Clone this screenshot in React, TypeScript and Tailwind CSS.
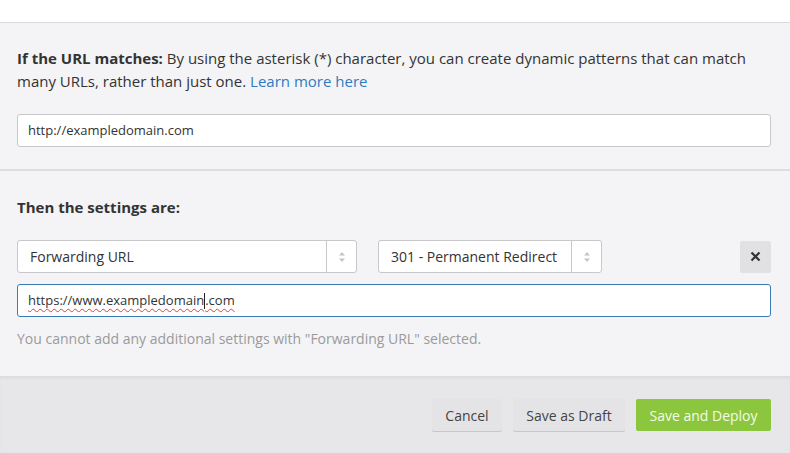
import React from "react";

function Arrows() {
  return (
    <svg width="8" height="14" viewBox="0 0 8 14">
      <path d="M4 2 L7 5.5 L1 5.5 Z" fill="#c4c4c6" />
      <path d="M4 12 L7 8.5 L1 8.5 Z" fill="#c4c4c6" />
    </svg>
  );
}

function Select({ label, width }: { label: string; width: string }) {
  return (
    <div className={`flex h-[33px] ${width} rounded-[3px] border border-[#c8c8ca] bg-white`}>
      <div className="flex flex-1 items-center pl-3 text-[14px] text-[#333]">{label}</div>
      <div className="flex w-[30px] items-center justify-center border-l border-[#c8c8ca]">
        <Arrows />
      </div>
    </div>
  );
}

export default function App() {
  return (
    <div className="h-[453px] w-[790px] overflow-hidden bg-[#f4f4f6] text-[#333]" style={{ fontFamily: '"Open Sans", sans-serif' }}>
      <div className="h-[23px] border-b border-[#dadadc] bg-white" />
      <div className="border-b-2 border-[#dedee0] pb-[22px] pl-[17px] pr-[19px] pt-[24px]">
        <p className="text-[15px] leading-[23px] text-[#333]">
          <span className="font-bold">If the URL matches:</span> By using the asterisk (*) character, you can create dynamic patterns that can match many URLs, rather than just one.{" "}
          <span className="text-[#2f7bbf]">Learn more here</span>
        </p>
        <div className="mt-[21px] flex h-[33px] items-center rounded-[3px] border border-[#c8c8ca] bg-white pl-[10px] text-[13px] text-[#333]">
          http://exampledomain.com
        </div>
      </div>
      <div className="pb-[27px] pl-[17px] pr-[19px] pt-[25px]">
        <div className="text-[15px] font-bold leading-[22px]">Then the settings are:</div>
        <div className="mt-[22px] flex items-center">
          <Select label="Forwarding URL" width="w-[340px]" />
          <div className="w-[21px]" />
          <Select label="301 - Permanent Redirect" width="w-[224px]" />
          <div className="flex-1" />
          <div className="flex h-[32px] w-[31px] items-center justify-center rounded-[2px] bg-[#e1e1e3]">
            <svg width="11" height="11" viewBox="0 0 11 11">
              <path d="M1.5 1.5 L9.5 9.5 M9.5 1.5 L1.5 9.5" stroke="#333" strokeWidth="2.2" />
            </svg>
          </div>
        </div>
        <div className="mt-[11px] flex h-[33px] items-center rounded-[3px] border border-[#3b7bb4] bg-white pl-[10px] text-[13px] text-[#333]">
          <span className="underline decoration-wavy decoration-[#e04040] decoration-1 underline-offset-[3px]">https://www.exampledomain</span>
          <span className="h-[16px] w-px bg-[#222]" />
          <span className="underline decoration-wavy decoration-[#e04040] decoration-1 underline-offset-[3px]">.com</span>
        </div>
        <div className="mt-[12px] text-[14px] leading-[20px] text-[#9a9a9c]">
          You cannot add any additional settings with "Forwarding URL" selected.
        </div>
      </div>
      <div className="flex h-[80px] justify-end gap-[11px] bg-[#e7e7e9] pr-[19px] pt-[23px] shadow-[inset_0_3px_3px_-1px_rgba(0,0,0,0.06)]">
        <button className="h-[32px] w-[70px] rounded-[2px] bg-[#e4e4e6] text-[14px] text-[#444] shadow-[0_1px_0_#c8c8ca]">Cancel</button>
        <button className="h-[32px] w-[112px] rounded-[2px] bg-[#e4e4e6] text-[14px] text-[#444] shadow-[0_1px_0_#c8c8ca]">Save as Draft</button>
        <button className="h-[32px] w-[135px] rounded-[2px] bg-[#8cc63e] text-[14px] text-[#f2fbe6]">Save and Deploy</button>
      </div>
    </div>
  );
}
